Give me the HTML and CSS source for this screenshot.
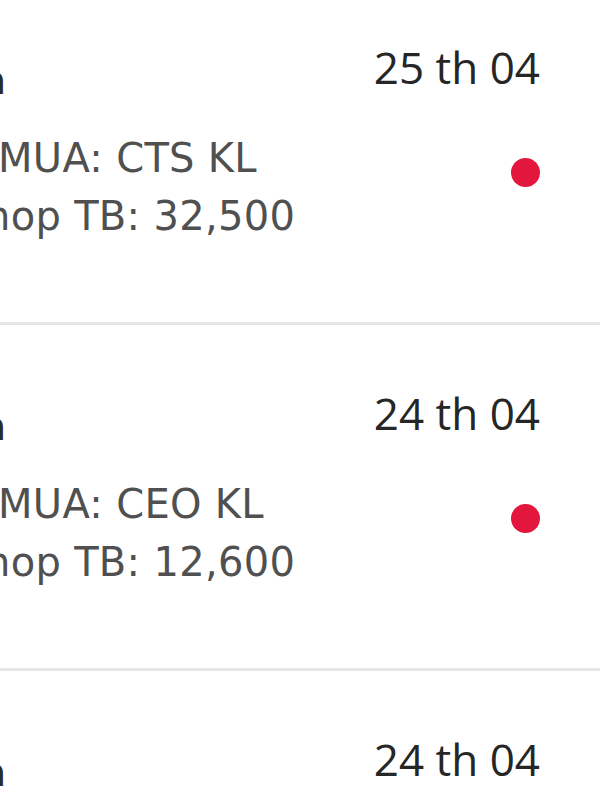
FILE: index.html
```html
<!DOCTYPE html>
<html lang="vi">
<head>
  <meta charset="UTF-8">
  <title>Thông báo khớp lệnh</title>
  <link rel="stylesheet" href="styles.css">
</head>
<body>

<div class="list">
  <div class="item">
    <div class="info">
      <div class="title"><span class="cut">Lệnh</span></div>
      <div class="line"><span class="cut">Lenh</span> MUA: CTS KL</div>
      <div class="line"><span class="cut">Gia k</span>hop TB: 32,500</div>
    </div>
    <div class="meta">
      <div class="date">25 th 04</div>
      <span class="dot"></span>
    </div>
  </div>

  <div class="item">
    <div class="info">
      <div class="title"><span class="cut">Lệnh</span></div>
      <div class="line"><span class="cut">Lenh</span> MUA: CEO KL</div>
      <div class="line"><span class="cut">Gia k</span>hop TB: 12,600</div>
    </div>
    <div class="meta">
      <div class="date">24 th 04</div>
      <span class="dot"></span>
    </div>
  </div>

  <div class="item">
    <div class="info">
      <div class="title"><span class="cut">Lệnh</span></div>
      <div class="line"><span class="cut">Lenh</span> BAN: CEO KL</div>
      <div class="line"><span class="cut">Gia k</span>hop TB: 12,500</div>
    </div>
    <div class="meta">
      <div class="date">24 th 04</div>
    </div>
  </div>
</div>

</body>
</html>
```

FILE: styles.css
```css
body {
  margin: 0;
  background: #ffffff;
  overflow: hidden;
}

.list {
  margin-top: -21px;
}

.item {
  display: flex;
  justify-content: space-between;
  box-sizing: border-box;
  height: 346px;
  padding-right: 60px;
  border-bottom: 3px solid #e6e6e6;
}

.info {
  flex: 1;
  margin-left: -200px;
  padding-top: 78px;
  font-family: "DejaVu Sans", sans-serif;
  white-space: nowrap;
}

.cut {
  display: inline-block;
  width: 185px;
  text-align: right;
}

.title {
  font-size: 38px;
  line-height: 48px;
  color: #2b2b2b;
  margin-bottom: 24px;
}

.title .cut {
  width: 206px;
}

.line {
  font-size: 40px;
  line-height: 58px;
  color: #505050;
  letter-spacing: 0.3px;
}

.meta {
  display: flex;
  flex-direction: column;
  align-items: flex-end;
  padding-top: 62px;
}

.date {
  font-family: "Open Sans", sans-serif;
  font-size: 44px;
  line-height: 52px;
  color: #262626;
  white-space: nowrap;
}

.dot {
  width: 29px;
  height: 29px;
  margin-top: 65px;
  border-radius: 50%;
  background: #e3173d;
}
```
